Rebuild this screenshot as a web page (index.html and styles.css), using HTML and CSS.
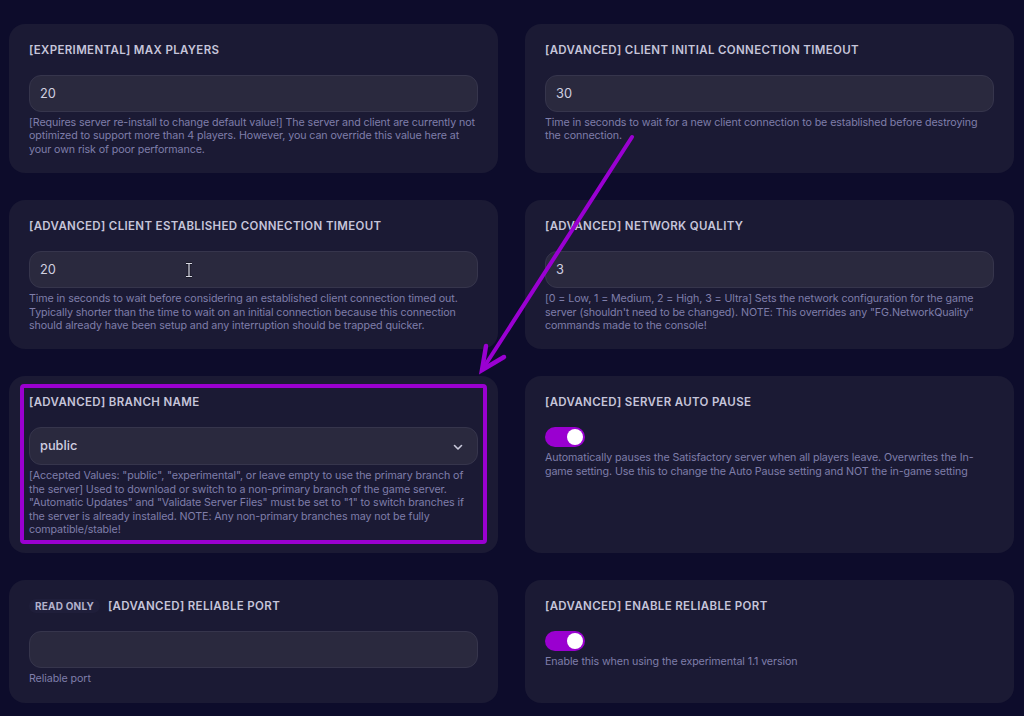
FILE: index.html
```html
<!DOCTYPE html>
<html lang="en">
<head>
<meta charset="utf-8">
<title>Server settings</title>
<link rel="stylesheet" href="styles.css">
</head>
<body>
<main class="grid">
  <section class="card">
    <div class="title">[EXPERIMENTAL] MAX PLAYERS</div>
    <div class="field">20</div>
    <p class="help">[Requires server re-install to change default value!] The server and client are currently not optimized to support more than 4 players. However, you can override this value here at your own risk of poor performance.</p>
  </section>
  <section class="card">
    <div class="title">[ADVANCED] CLIENT INITIAL CONNECTION TIMEOUT</div>
    <div class="field">30</div>
    <p class="help">Time in seconds to wait for a new client connection to be established before destroying the connection.</p>
  </section>
  <section class="card">
    <div class="title">[ADVANCED] CLIENT ESTABLISHED CONNECTION TIMEOUT</div>
    <div class="field">20
      <svg class="ibeam" width="8" height="16" viewBox="0 0 8 16"><path d="M1 1.5h6M4 1.5v13M1 14.5h6" stroke="#1a1a28" stroke-width="3" fill="none"/><path d="M1 1.5h6M4 1.5v13M1 14.5h6" stroke="#d8d8e4" stroke-width="1.2" fill="none"/></svg>
    </div>
    <p class="help">Time in seconds to wait before considering an established client connection timed out. Typically shorter than the time to wait on an initial connection because this connection should already have been setup and any interruption should be trapped quicker.</p>
  </section>
  <section class="card">
    <div class="title">[ADVANCED] NETWORK QUALITY</div>
    <div class="field">3</div>
    <p class="help">[0 = Low, 1 = Medium, 2 = High, 3 = Ultra] Sets the network configuration for the game server (shouldn't need to be changed). NOTE: This overrides any "FG.NetworkQuality" commands made to the console!</p>
  </section>
  <section class="card">
    <div class="title">[ADVANCED] BRANCH NAME</div>
    <div class="field select">public
      <svg class="chev" width="10" height="8" viewBox="0 0 10 8"><path d="M1.5 2.5l3.5 3.5 3.5-3.5" stroke="#c9c8da" stroke-width="1.6" fill="none" stroke-linecap="round" stroke-linejoin="round"/></svg>
    </div>
    <p class="help">[Accepted Values: "public", "experimental", or leave empty to use the primary branch of the server] Used to download or switch to a non-primary branch of the game server. "Automatic Updates" and "Validate Server Files" must be set to "1" to switch branches if the server is already installed. NOTE: Any non-primary branches may not be fully compatible/stable!</p>
    <div class="highlight"></div>
  </section>
  <section class="card">
    <div class="title">[ADVANCED] SERVER AUTO PAUSE</div>
    <div class="toggle"><span class="knob"></span></div>
    <p class="help">Automatically pauses the Satisfactory server when all players leave. Overwrites the In-game setting. Use this to change the Auto Pause setting and NOT the in-game setting</p>
  </section>
  <section class="card">
    <div class="title-row"><span class="badge">READ ONLY</span><span class="title">[ADVANCED] RELIABLE PORT</span></div>
    <div class="field"></div>
    <p class="help">Reliable port</p>
  </section>
  <section class="card">
    <div class="title">[ADVANCED] ENABLE RELIABLE PORT</div>
    <div class="toggle"><span class="knob"></span></div>
    <p class="help">Enable this when using the experimental 1.1 version</p>
  </section>
</main>
<svg class="arrow" width="1024" height="716" viewBox="0 0 1024 716">
  <line x1="632" y1="137" x2="484" y2="367" stroke="#9a00d2" stroke-width="4" stroke-linecap="round"/>
  <polyline points="486,346 482,370 504,357" stroke="#9a00d2" stroke-width="4.5" fill="none" stroke-linejoin="miter" stroke-linecap="round"/>
</svg>
</body>
</html>
```
FILE: styles.css
```css
* { box-sizing: border-box; }
html, body { margin: 0; padding: 0; }
body {
  background: #0d0c2b;
  font-family: Inter, "Noto Sans", "Liberation Sans", sans-serif;
  width: 1024px;
  height: 716px;
  overflow: hidden;
  position: relative;
}
.grid {
  display: grid;
  grid-template-columns: 489px 489px;
  column-gap: 27px;
  row-gap: 27px;
  padding: 24px 10px 0 9px;
}
.card {
  position: relative;
  background: #1b1a34;
  border-radius: 16px;
  padding: 17px 20px 17px 20px;
}
.title {
  font-size: 11.5px;
  font-weight: 600;
  letter-spacing: 0.03em;
  line-height: 18px;
  color: #c6c5da;
  margin-bottom: 16px;
}
.title-row {
  display: flex;
  align-items: center;
  gap: 8px;
  margin-bottom: 16px;
  height: 18px;
}
.title-row .title { margin-bottom: 0; }
.badge {
  background: #1f1e3a;
  color: #b3b2cc;
  font-size: 10px;
  font-weight: 700;
  letter-spacing: 0.02em;
  line-height: 14px;
  height: 14px;
  padding: 0 6px;
  border-radius: 7px;
}
.field {
  position: relative;
  height: 37px;
  background: #2a293e;
  border: 1px solid #36354c;
  border-radius: 12px;
  color: #d0cfe0;
  font-size: 12.8px;
  line-height: 35px;
  padding: 0 10px;
}
.field.select { height: 38px; line-height: 36px; font-weight: 500; }
.chev { position: absolute; right: 14px; top: 15px; }
.ibeam { position: absolute; left: 155px; top: 10px; }
.help {
  margin: 4px 0 0 0;
  font-size: 10.7px;
  letter-spacing: -0.1px;
  line-height: 13.4px;
  color: #7f7eaa;
}
.toggle {
  width: 40px;
  height: 20px;
  border-radius: 10px;
  background: #9a00d0;
  display: flex;
  align-items: center;
  justify-content: flex-end;
  padding: 0 2px;
}
.knob {
  width: 16px;
  height: 16px;
  border-radius: 50%;
  background: #ffffff;
}
.highlight {
  position: absolute;
  left: 11px;
  top: 8px;
  right: 11px;
  bottom: 9px;
  border: 4px solid #9a00d0;
  border-radius: 4px;
  pointer-events: none;
}
.arrow {
  position: absolute;
  left: 0;
  top: 0;
  pointer-events: none;
}
```
